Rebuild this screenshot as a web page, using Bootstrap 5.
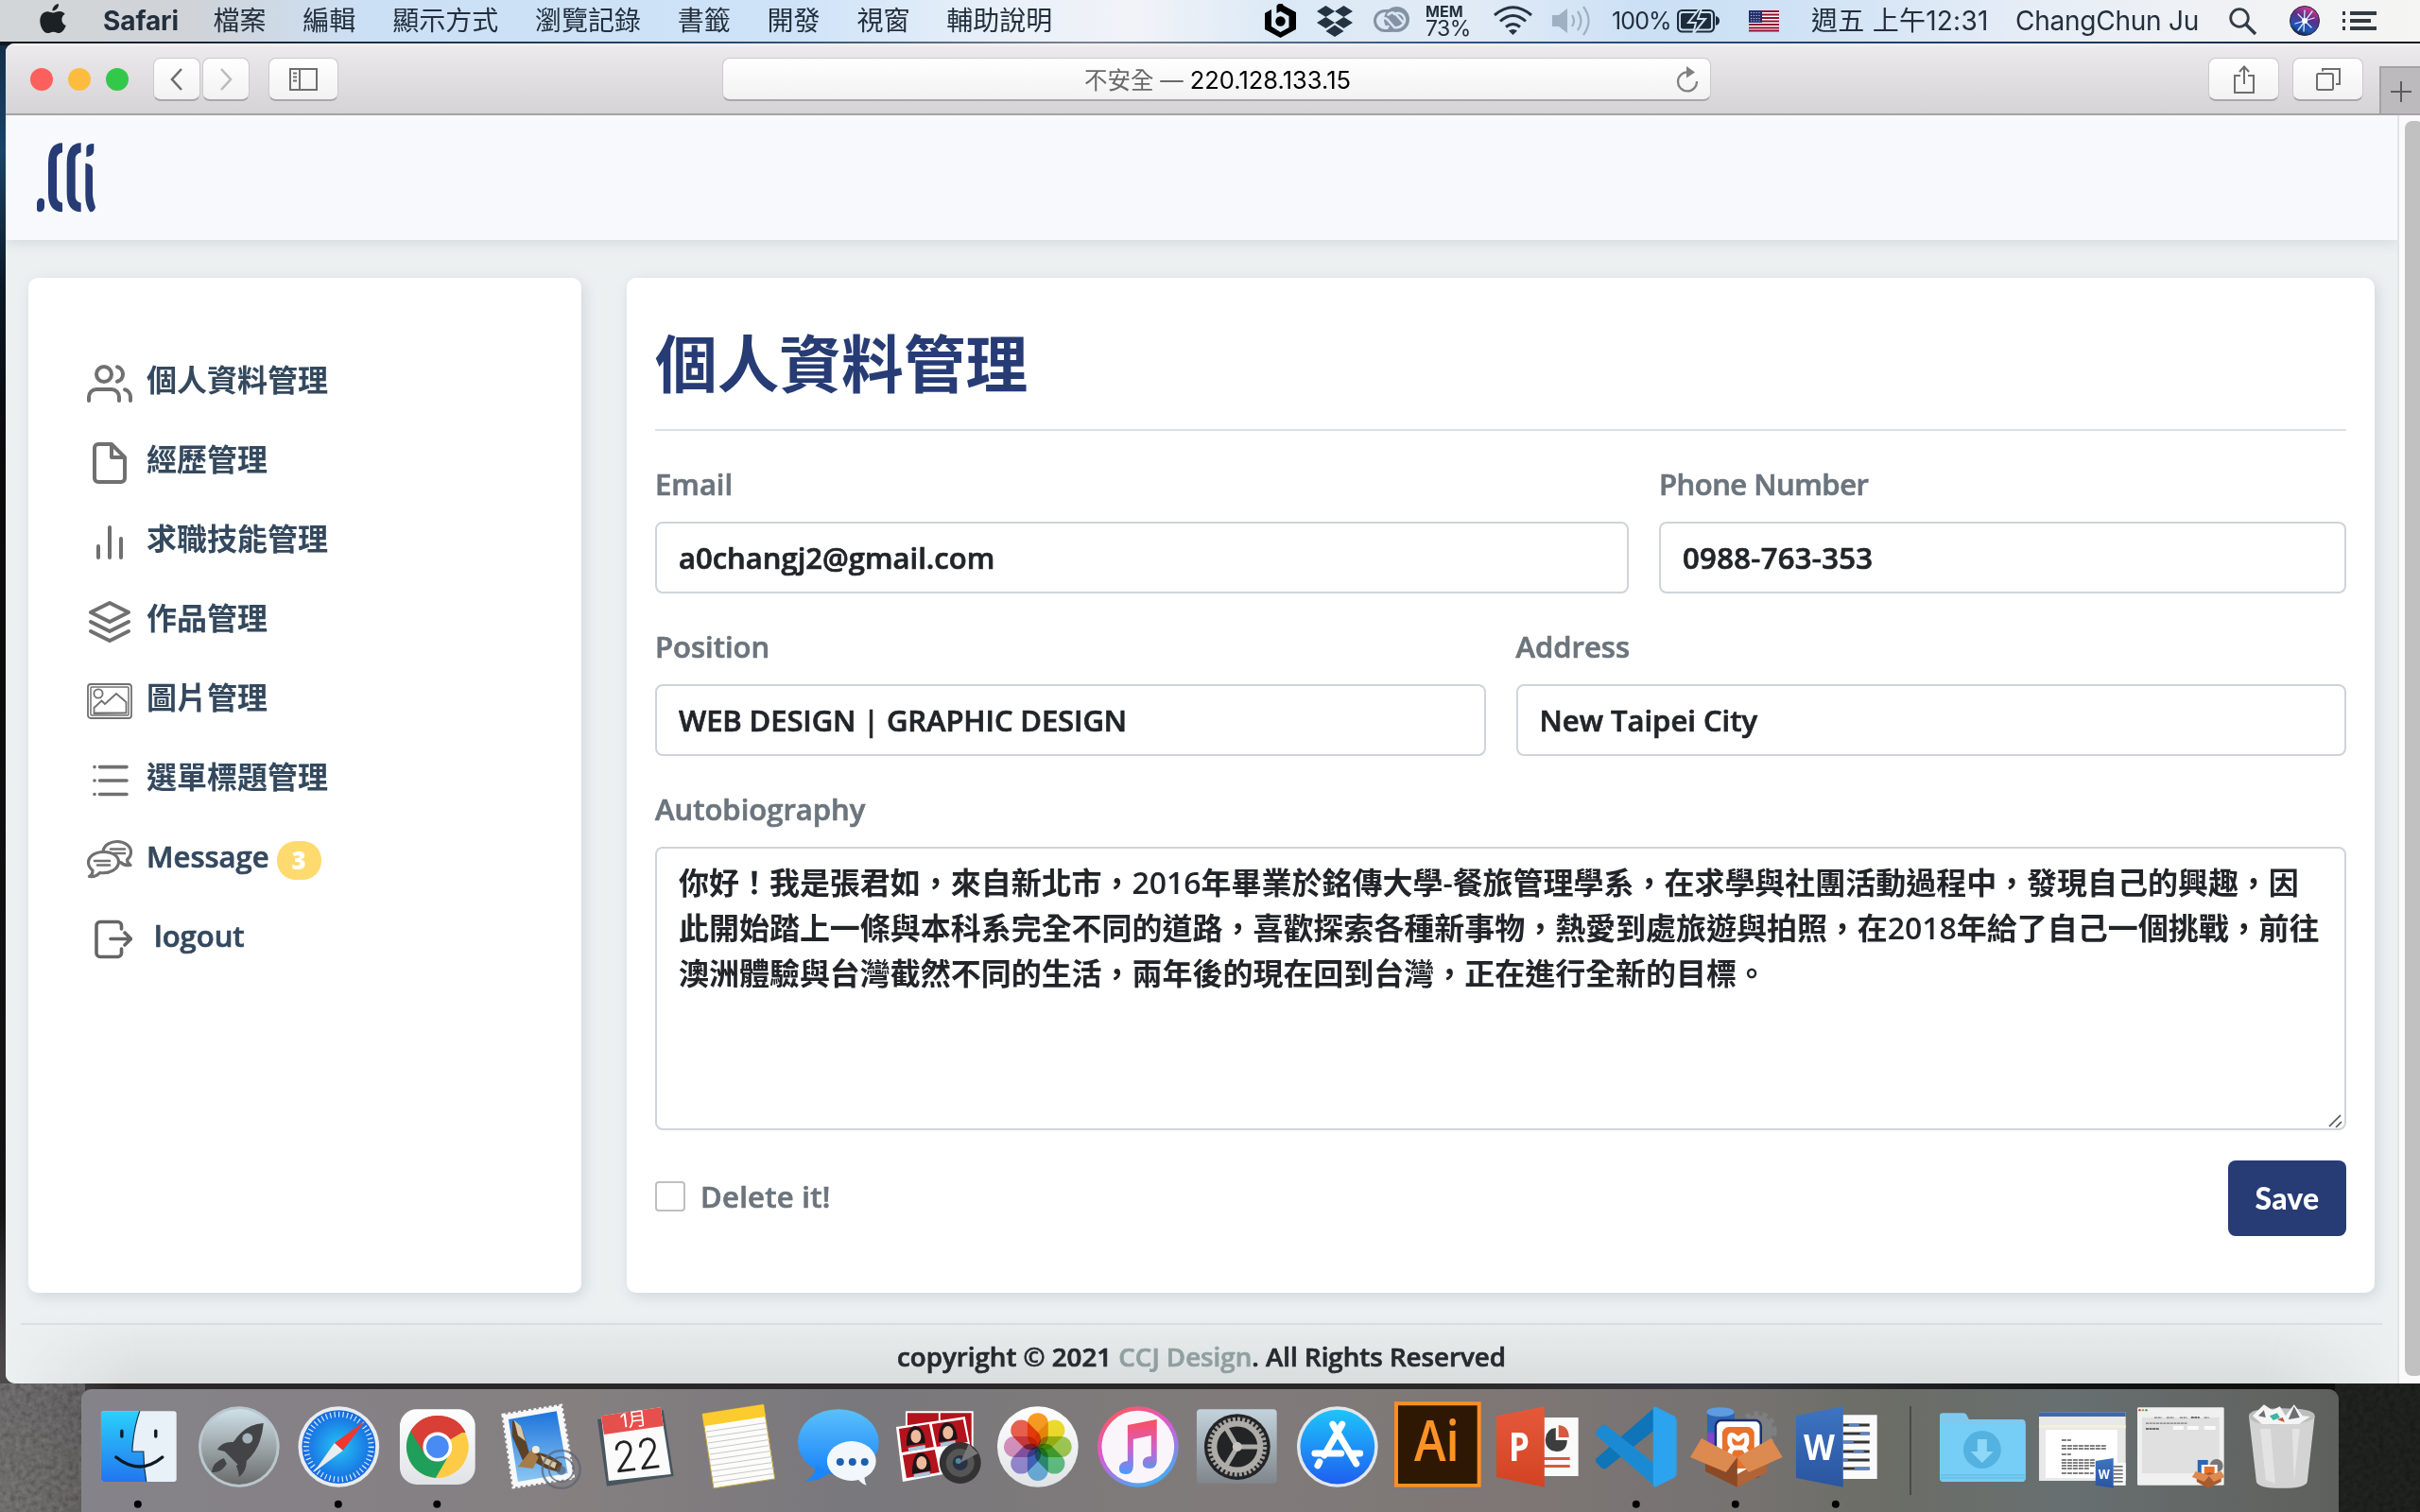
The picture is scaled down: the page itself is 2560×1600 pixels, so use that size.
<!DOCTYPE html>
<html lang="zh-Hant">
<head>
<meta charset="utf-8">
<title>個人資料管理</title>
<link href="https://cdn.jsdelivr.net/npm/bootstrap@5.3.0/dist/css/bootstrap.min.css" rel="stylesheet">
<style>
:root{--navy:#273c75;--slate:#34495e;--page:#ecf0f1}
html,body{width:2560px;height:1600px;overflow:hidden}
body{font-family:"Open Sans","Noto Sans CJK TC",sans-serif;background:#0c0e12;color:#212529}
svg{display:block;flex:none}
.desktop{width:2560px;height:1600px;isolation:isolate}
.wall{inset:0;z-index:-1}
/* menu bar */
.menubar{height:44px;font:400 28px/44px Inter,"Noto Sans CJK TC",sans-serif;color:#232f3d;
 background:linear-gradient(90deg,#d3d6d8 0,#cfd3d8 8%,#cce0f5 15%,#cfe3f8 33%,#eaf1f9 42%,#f1f3f8 47%,#dbe9f6 53%,#e1ebf6 61%,#cbe0f5 68%,#cfe2f5 74%,#e6edf6 84%,#eef1f5 90%,#f5f5f3 100%);white-space:nowrap}
.menubar .apple{margin-left:42px;width:67px}
.menubar .app-name{width:116.5px;font-weight:700;letter-spacing:-.1px}
.menu-items{gap:38.8px}
.tray{display:grid;grid-template-columns:55px 60px 55px 72px 62px 63px 69px 76px 66px 216px 226px 64px 56px 82px;align-items:center}
.mem{font-size:23px;line-height:20px;letter-spacing:-.6px}
.mem b{display:block;font-size:16px;line-height:16px;letter-spacing:.1px}
.pct{font-size:25px;letter-spacing:-.9px}
.clock{letter-spacing:.25px}
.user{letter-spacing:-.25px}
/* browser window */
.browser{width:2554px;height:1418px;margin:2px 0 0 6px;border-radius:9px 0 0 10px;overflow:hidden;background:var(--page)}
.toolbar{height:76px;padding:2px 0 0 26px;border-bottom:2px solid #a5a2a6;background:linear-gradient(#f5f4f5 0,#ebe9eb 6%,#d5d3d6 100%)}
.light{width:24px;height:24px;border-radius:50%;margin-right:16px;flex:none}
.light-red{background:#fc605c}.light-amber{background:#fdbc40}.light-green{background:#34c84a;margin-right:26px}
.tbtn{height:46px;flex:none;border-radius:8px;background:linear-gradient(#fff,#f2f2f2);border:1px solid #cbc9cb;border-bottom:2px solid #a9a7a9;display:flex;align-items:center;justify-content:center}
.nav-btn{width:50px;margin-right:2px}
.tool-btn{width:75px}
.side-btn{width:74px;margin-left:18px}
.tabs-btn{margin-left:14px}
.addr{width:1046px;margin-left:406px;margin-right:526px;padding:2px 0 0 2px;font:25.500px/44px Inter,"Noto Sans CJK TC",sans-serif;position:relative;color:#000}
.addr .secure{color:#6a6a6a;white-space:pre;font-size:24.500px}
.addr .reload{position:absolute;right:12px;top:6px}
.newtab{width:43px;height:50px;margin-left:17px;flex:none;background:#bcbabd;border:solid #a5a2a6;border-width:2px 0 0 2px}
/* page */
.site{width:2532px;flex:none;border-right:2px solid #e2e4e4;background:var(--page);height:1342px}
.site-head{height:132px;background:#f8f9fc;box-shadow:0 2px 14px rgba(60,80,90,.16);padding:8px 14px;position:relative;clip-path:inset(0 0 -30px 0)}
.scroller{width:22px;padding:6px 0 8px 6px;background:#fafafa}
.thumb{width:20px;height:100%;background:#c1c1c1;border-radius:8px}
.panels{margin:40px 24px 0;gap:48px;height:1074px}
.panel{background:#fff;border-radius:10px;box-shadow:3px 4px 14px rgba(110,125,145,.22)}
.side{width:585px;flex:none;padding:67px 0 0 62px}
.main{width:1849px;flex:none;padding:50px 30px 0}
.side li{height:84px;font-size:32px;font-weight:600;color:var(--slate);gap:15px;line-height:84px}
.side li>span:not(.count){position:relative;top:-1px}
.side svg{position:relative;top:3px}
.side .latin{font-size:31px}
.side .latin,.form-label,input.form-control,.check-label,.foot p{-webkit-text-stroke:.7px currentColor}
.count{width:47px;height:41px;border-radius:20px;background:#ffda6f;font-size:26px;line-height:41px;color:#fff;font-weight:800;padding:0;margin:7px 0 0 -7px}
h1{font-size:65.700px;line-height:80px;font-weight:700;color:var(--navy);margin:1px 0 29px}
.rule{height:2px;background:#dbdfe6}
.fields{margin-top:32px;display:flex;gap:32px}
.col-email{width:1030px}.col-phone{width:727px}
.form-label{display:block;font-size:31px;line-height:48px;font-weight:600;color:#6c757d;margin:0 0 16px}
.col-phone .form-label{letter-spacing:-.5px}
.form-control{font-size:31px;line-height:48px;font-weight:600;color:#212529;padding:12px 23px;border:2px solid #ced4da;border-radius:8px;height:76px}
.col-phone .form-control{letter-spacing:.35px}
.caps{letter-spacing:-.12px}
textarea.form-control{height:300px;font-size:32px;letter-spacing:-.03px;padding:12px 20px 0 23px;white-space:pre;overflow:hidden;resize:none}
.grip{position:absolute;right:3px;bottom:2px}
.actions{margin-top:32px}
.check-row{height:76px}
.check-label{font-size:31px;line-height:48px;font-weight:600;color:#6c757d;letter-spacing:.3px}
.form-check-input{width:32px;height:32px;border:2px solid #bfbfbf;border-radius:8px;margin:0 16px 0 0}
.btn-save{width:125px;height:80px;border-radius:8px;background:var(--navy);color:#fff;font:900 32px/80px Lato,sans-serif;letter-spacing:.2px;padding:0;border:0}
.foot{padding:32px 16px 0;height:96px;font-size:27.700px;font-weight:600}
.foot p{margin:12px 0 0;line-height:42px;text-align:center}
.foot span{color:#95a5a6}
.footshade{left:6px;top:1390px;width:2530px;height:74px;background:linear-gradient(rgba(100,105,105,0),rgba(100,105,105,.14));border-radius:0 0 0 10px;-webkit-mask:linear-gradient(90deg,transparent 0,#000 140px,#000 2390px,transparent 2530px);mask:linear-gradient(90deg,transparent 0,#000 140px,#000 2390px,transparent 2530px)}
/* dock */
.dock{width:2388px;height:130px;margin:6px 0 0 86px;padding-left:8.200px;border-radius:11px 11px 0 0;background:linear-gradient(90deg,#85838a 0,#857f80 22%,#79787c 34%,#807b7a 50%,#7d7675 64%,#757270 74%,#6b6d66 80%,#686f70 88%,#5e605c 100%);overflow:hidden}
.dock>svg{width:105.650px;height:130px}
.dock>.sep{width:48.700px}
.petals rect{mix-blend-mode:multiply}
</style>
<script src="https://cdn.jsdelivr.net/npm/bootstrap@5.3.0/dist/js/bootstrap.bundle.min.js"></script>
</head>
<body>
<div class="desktop d-flex flex-column position-relative">
<svg class="wall position-absolute" width="2560" height="1600" viewBox="0 0 2560 1600">
 <defs>
  <linearGradient id="wl" x1="0" y1="0" x2="0" y2="1"><stop offset="0" stop-color="#10253d"/><stop offset=".1" stop-color="#1a4468"/><stop offset=".19" stop-color="#0a1826"/><stop offset=".3" stop-color="#0a0a0b"/><stop offset=".8" stop-color="#151415"/><stop offset=".9" stop-color="#4b484a"/><stop offset="1" stop-color="#55534f"/></linearGradient>
  <linearGradient id="wb" x1="0" x2="1"><stop offset="0" stop-color="#4a4646" stop-opacity="0"/><stop offset=".05" stop-color="#2a2627"/><stop offset=".6" stop-color="#2b2727"/><stop offset=".7" stop-color="#33333d"/><stop offset=".85" stop-color="#101412"/><stop offset="1" stop-color="#0b0e0a"/></linearGradient>
  <linearGradient id="wt" x1="0" x2="1"><stop offset="0" stop-color="#10171f"/><stop offset=".3" stop-color="#274a70"/><stop offset=".45" stop-color="#7d8490"/><stop offset=".6" stop-color="#2d5484"/><stop offset=".9" stop-color="#16355c"/><stop offset="1" stop-color="#15181c"/></linearGradient>
  <filter id="grain" x="0" y="0" width="1" height="1"><feTurbulence type="fractalNoise" baseFrequency=".18" numOctaves="3" seed="4"/><feColorMatrix values=".6 0 0 0 .05  .6 0 0 0 .05  .6 0 0 0 .05  0 0 0 0 .35"/></filter>
 </defs>
 <rect width="2560" height="1600" fill="url(#wl)"/><rect y="1460" width="2560" height="140" fill="url(#wb)"/><rect y="40" width="2560" height="8" fill="url(#wt)"/>
 <rect y="1464" width="90" height="136" filter="url(#grain)"/><rect x="2470" y="1464" width="90" height="136" filter="url(#grain)" opacity=".35"/>
</svg>

<header class="menubar d-flex">
 <svg class="apple" viewBox="0 0 67 44"><path fill="#1c2126" d="M20 4c.4 3.600-2.600 7.600-6.500 7.400C13.200 8 16.500 4.300 20 4zM14 13.500c2.200 0 3.600-1.600 7-1.600 2.500 0 4.400 1.100 5.800 2.800-5.200 3.200-4.200 10.400 1 12.400-1.600 4.200-4.300 8-7.300 8-2.200 0-3.200-1.400-6-1.400s-3.900 1.400-6 1.400C4 35.100.3 27.800.3 21.900c0-6 3.800-9.700 7.800-9.700 2.600 0 4.500 1.300 5.900 1.300z"/></svg>
 <span class="app-name">Safari</span>
 <nav class="menu-items d-flex"><span>檔案</span><span>編輯</span><span>顯示方式</span><span>瀏覽記錄</span><span>書籤</span><span>開發</span><span>視窗</span><span>輔助說明</span></nav>
 <div class="tray ms-auto">
  <svg width="33" height="44" viewBox="0 0 33 44"><path fill-rule="evenodd" d="M0 14l7-4v18l9.500 6 9-5V17l-9-5-4 2V6l2-2h4l1.500 2L33 13v18L16.500 40 0 31z"/><circle cx="16.500" cy="22.500" r="5.200"/></svg>
  <svg width="38" height="44" viewBox="0 0 38 44" fill="#243342"><path d="M9.500 6L19 12l-9.500 6L0 12zM28.500 6L38 12l-9.500 6L19 12zM9.500 18L19 24l-9.500 6L0 24zM28.500 18L38 24l-9.500 6L19 24zM19 26.500L28.500 33 19 39 9.500 33z"/></svg>
  <svg width="38" height="44" viewBox="0 0 38 44" fill="none" stroke="#8493a3"><rect x="1.500" y="11.500" width="27" height="21" rx="10.500" stroke-width="3"/><circle cx="24.500" cy="20.500" r="13.500" fill="#8493a3" stroke="none"/><path stroke="#d9e6f4" stroke-width="2.600" stroke-linecap="round" d="M22 29L14.500 20.500q-3.500-3-6.500.5-2 4 1 7 3 2 6.500 0M15.500 15.500q4-4 8-.5l8.500 9.500M22 15q5-3 9 1 4 5 0 10-4 4-9 3"/></svg>
  <span class="mem"><b>MEM</b>73%</span>
  <svg width="41" height="44" viewBox="0 0 41 44" fill="none" stroke="#243342" stroke-width="3"><path d="M1 16Q20.500-.5 40 16M7 22.500Q20.500 10.500 34 22.500M13 28.500q7.500-6 15 0"/><path fill="#243342" stroke="none" d="M16 32.500q4.500-3 9 0L20.500 37z"/></svg>
  <svg width="41" height="44" viewBox="0 0 41 44" fill="none" stroke="#9fb0c2" stroke-width="2.200"><path fill="#9fb0c2" stroke="none" d="M0 16h7l9-7v26l-9-7H0z"/><path d="M21 16q4 6 0 12M27 12q7 10 0 20M33 7q11 15 0 30"/></svg>
  <span class="pct">100%</span>
  <svg width="45" height="44" viewBox="0 0 45 44"><rect x="1" y="11" width="38" height="22.500" rx="4.500" fill="none" stroke="#1d2b3a" stroke-width="2.200"/><rect x="4" y="14" width="32" height="16.500" rx="2" fill="#1d2b3a"/><path d="M24 9L12 24h8l-3 12 13-16h-8l4-11z" fill="#1d2b3a" stroke="#cfe2f5" stroke-width="2"/><path fill="#1d2b3a" d="M41 17q4 1 4 5t-4 5z"/></svg>
  <svg width="32" height="44" viewBox="0 0 32 44"><path fill="#fff" d="M0 11h32v22H0z"/><path stroke="#8e1230" stroke-width="2" d="M0 12h32M0 15.500h32M0 19h32M0 22.500h32M0 26h32M0 29.500h32M0 32.500h32"/><path fill="#20306b" d="M0 11h14v13H0z"/><path stroke="#c5cce4" stroke-dasharray="1.200 1.600" d="M2 13.500h11M2 16.500h11M2 19.500h11M2 22h11"/></svg>
  <span class="clock">週五 上午12:31</span>
  <span class="user">ChangChun Ju</span>
  <svg width="30" height="44" viewBox="0 0 30 44" fill="none" stroke="#333c46" stroke-width="2.800"><circle cx="11" cy="19" r="9.300"/><path stroke-width="3.400" d="M18 26l10 10"/></svg>
  <svg width="32" height="44" viewBox="0 0 32 44"><defs><linearGradient id="siri" x1=".7" y1="0" x2=".3" y2="1"><stop offset="0" stop-color="#e03a92"/><stop offset=".4" stop-color="#5a2f8a"/><stop offset=".75" stop-color="#1d57b8"/><stop offset="1" stop-color="#171a36"/></linearGradient></defs><circle cx="16" cy="22" r="15.500" fill="url(#siri)" stroke="#262b33"/><path fill="none" stroke="#cfeeff" stroke-width="1.300" stroke-linecap="round" d="M16 11l-1 22M6 25l20-6M9 15l14 14M24 12L9 32"/><circle cx="16" cy="22" r="3" fill="#f4fdff"/></svg>
  <svg width="36" height="44" viewBox="0 0 36 44" stroke="#333a42" stroke-width="4"><path d="M0 14h3M8 14h28M0 22h3M8 22h22M0 30h3M8 30h28"/></svg>
 </div>
</header>

<div class="browser flex-shrink-0">
 <div class="toolbar d-flex align-items-center">
  <i class="light light-red"></i><i class="light light-amber"></i><i class="light light-green"></i>
  <div class="tbtn nav-btn"><svg width="16" height="26" viewBox="0 0 16 26" fill="none" stroke="#6e6e6e" stroke-width="2.600"><path d="M13 2L3 13l10 11"/></svg></div>
  <div class="tbtn nav-btn"><svg width="16" height="26" viewBox="0 0 16 26" fill="none" stroke="#bcbcbc" stroke-width="2.600"><path d="M3 2l10 11L3 24"/></svg></div>
  <div class="tbtn side-btn"><svg width="30" height="24" viewBox="0 0 30 24" fill="none" stroke="#6e6e6e" stroke-width="2"><path d="M1 1h28v22H1zM11 1v22M4 5.500h4M4 9.500h4M4 13.500h4"/></svg></div>
  <div class="tbtn addr"><span class="secure">不安全 — </span><span>220.128.133.15</span>
   <svg class="reload" width="24" height="32" viewBox="0 0 24 32"><path d="M13 8.500A10 10 0 1 0 22 18" fill="none" stroke="#808080" stroke-width="2.300"/><path fill="#808080" d="M11 2l9 6.500-9 6z"/></svg></div>
  <div class="tbtn tool-btn"><svg width="24" height="32" viewBox="0 0 24 32" fill="none" stroke="#6e6e6e" stroke-width="2"><path d="M8 12H2v18h20V12h-6M12 21V3M7 8l5-5.500L17 8"/></svg></div>
  <div class="tbtn tool-btn tabs-btn"><svg width="26" height="26" viewBox="0 0 26 26" fill="none" stroke="#6e6e6e" stroke-width="2"><rect x="1" y="7" width="17" height="17" rx="1.500"/><path d="M7 4.500V2h18v16h-4"/></svg></div>
  <div class="newtab align-self-end"><svg width="41" height="48" viewBox="0 0 41 48" stroke="#5c5c5e" stroke-width="2"><path d="M21 14v22M10 25h22"/></svg></div>
 </div>
 <div class="d-flex">
 <div class="site">
  <div class="site-head">
   <svg width="110" height="110" viewBox="0 0 330 330" fill="#273c75"><path d="M138 64Q93 64 93 130V222Q93 283 138 283V254Q120 252 120 232V115Q120 98 138 94zM197 64Q152 64 152 130V222Q152 283 197 283V254Q179 252 179 232V115Q179 98 197 94zM238 66Q214 66 214 80V108Q238 106 238 88zM211 128Q234 130 234 148V225Q234 240 243 268Q240 283 226 283Q211 262 211 232zM69 239Q81 240 81 250V267Q80 282 66 283Q57 283 57 274V255Q58 241 69 239z"/></svg>
  </div>
  <div class="panels d-flex">
   <aside class="panel side">
    <ul class="list-unstyled m-0">
     <li class="d-flex align-items-center"><svg width="48" height="48" viewBox="0 0 24 24" fill="none" stroke="#707070" stroke-width="2" stroke-linecap="round" stroke-linejoin="round"><path d="M17 21v-2a4 4 0 0 0-4-4H5a4 4 0 0 0-4 4v2"/><circle cx="9" cy="7" r="4"/><path d="M23 21v-2a4 4 0 0 0-3-3.870M16 3.130a4 4 0 0 1 0 7.750"/></svg><span>個人資料管理</span></li>
     <li class="d-flex align-items-center"><svg width="48" height="48" viewBox="0 0 24 24" fill="none" stroke="#707070" stroke-width="2" stroke-linecap="round" stroke-linejoin="round"><path d="M13 2H6a2 2 0 0 0-2 2v16a2 2 0 0 0 2 2h12a2 2 0 0 0 2-2V9zM13 2v7h7"/></svg><span>經歷管理</span></li>
     <li class="d-flex align-items-center"><svg width="48" height="48" viewBox="0 0 24 24" fill="none" stroke="#707070" stroke-width="2" stroke-linecap="round"><path d="M18 20V10M12 20V4M6 20v-6"/></svg><span>求職技能管理</span></li>
     <li class="d-flex align-items-center"><svg width="48" height="48" viewBox="0 0 24 24" fill="none" stroke="#707070" stroke-width="2" stroke-linecap="round" stroke-linejoin="round"><path d="M12 2L2 7l10 5 10-5zM2 17l10 5 10-5M2 12l10 5 10-5"/></svg><span>作品管理</span></li>
     <li class="d-flex align-items-center"><svg width="48" height="48" viewBox="0 0 48 48" fill="none" stroke="#707070" stroke-width="1.800"><rect x="1" y="6" width="46" height="36" rx="3"/><rect x="4" y="9" width="40" height="30" rx="1" stroke-width="1.500"/><circle cx="12" cy="16" r="4.600"/><path d="M7.500 37V31l8-7.500 3.500 3.500 12-11L41.500 25V36.500zM7.500 36.500h34"/></svg><span>圖片管理</span></li>
     <li class="d-flex align-items-center"><svg width="48" height="48" viewBox="0 0 48 48" fill="none" stroke="#707070" stroke-width="3.600" stroke-linecap="round"><path d="M8 9.600h.01M13.500 9.600H42M8 24h.01M13.500 24H42M8 38.500h.01M13.500 38.500H42"/></svg><span>選單標題管理</span></li>
     <li class="d-flex align-items-center"><svg width="48" height="48" viewBox="0 0 48 48" fill="#fff" stroke="#707070" stroke-width="3.200" stroke-linejoin="round" stroke-linecap="round"><path d="M17 15C18 7.500 26 4.500 32 4.500c8 0 14.500 5 14.500 11 0 4-2 6.500-4 8 0 3 1.500 4.500 3.500 6-4 .5-8-.5-10.500-3l-7 0z"/><path d="M17.500 15.500C8 15.500 1.500 20.500 1.500 26.500c0 4 2 6.500 4.500 8.500 0 3-1.500 5.500-3.500 6.500 4 .5 8.500-1 11-4 11 1.500 20-4 20-11.500 0-6-6.500-10.500-16-10.500z"/><path stroke-width="2.600" d="M8 25h16M11 29.500h13M25 12.500h15M29 17h11"/></svg><span class="latin">Message</span><span class="badge count">3</span></li>
     <li class="d-flex align-items-center"><svg width="48" height="48" viewBox="0 0 48 48" fill="none" stroke="#656565" stroke-width="3.600" stroke-linecap="round" stroke-linejoin="round"><path d="M36.500 13V9.500a4 4 0 0 0-4-4H14a4 4 0 0 0-4 4v29a4 4 0 0 0 4 4h18.500a4 4 0 0 0 4-4V34M25 23.500h21.500M40 17l6.500 6.500L40 30"/></svg><span class="latin ms-2">logout</span></li>
    </ul>
   </aside>
   <main class="panel main">
    <h1>個人資料管理</h1>
    <div class="rule"></div>
    <form>
     <div class="fields">
      <div class="col-email"><label class="form-label">Email</label><input class="form-control" value="a0changj2@gmail.com"></div>
      <div class="col-phone"><label class="form-label">Phone Number</label><input class="form-control" value="0988-763-353"></div>
     </div>
     <div class="fields">
      <div class="flex-fill"><label class="form-label">Position</label><input class="form-control caps" value="WEB DESIGN | GRAPHIC DESIGN"></div>
      <div class="flex-fill"><label class="form-label">Address</label><input class="form-control" value="New Taipei City"></div>
     </div>
     <div class="fields">
      <div class="flex-fill position-relative"><label class="form-label">Autobiography</label><textarea class="form-control">你好！我是張君如，來自新北市，2016年畢業於銘傳大學-餐旅管理學系，在求學與社團活動過程中，發現自己的興趣，因
此開始踏上一條與本科系完全不同的道路，喜歡探索各種新事物，熱愛到處旅遊與拍照，在2018年給了自己一個挑戰，前往
澳洲體驗與台灣截然不同的生活，兩年後的現在回到台灣，正在進行全新的目標。</textarea>
      <svg class="grip" width="16" height="16" viewBox="0 0 16 16" stroke="#555" stroke-width="1.700"><path d="M1 14L13 2M8 15l6-6"/></svg></div>
     </div>
     <div class="actions d-flex justify-content-between">
      <div class="check-row d-flex align-items-center"><input type="checkbox" class="form-check-input"><span class="check-label">Delete it!</span></div>
      <button type="button" class="btn btn-save">Save</button>
     </div>
    </form>
   </main>
  </div>
  <footer class="foot"><div class="rule"></div><p>copyright © 2021 <span>CCJ Design</span>. All Rights Reserved</p></footer>
 </div>
 <div class="scroller"><div class="thumb"></div></div>
 </div>
</div>
<div class="footshade position-absolute"></div>

<div class="dock d-flex flex-shrink-0">
<svg viewBox="0 0 106 130"><defs>
 <linearGradient id="fa" x1="0" y1="0" x2="0" y2="1"><stop offset="0" stop-color="#2bd0fd"/><stop offset="1" stop-color="#2276ee"/></linearGradient>
 <linearGradient id="sky" x1="0" y1="0" x2="0" y2="1"><stop offset="0" stop-color="#1e74dc"/><stop offset="1" stop-color="#8cc6f2"/></linearGradient>
 <linearGradient id="sil" x1="0" y1="0" x2="0" y2="1"><stop offset="0" stop-color="#cfe0e8"/><stop offset="1" stop-color="#6b6c6b"/></linearGradient>
 <linearGradient id="st" x1="0" y1="0" x2="0" y2="1"><stop offset="0" stop-color="#1ec4fb"/><stop offset="1" stop-color="#1e5ff0"/></linearGradient>
 <linearGradient id="msg" x1="0" y1="0" x2="0" y2="1"><stop offset="0" stop-color="#5ac1fb"/><stop offset="1" stop-color="#1a82fb"/></linearGradient>
 <radialGradient id="sf"><stop offset="0" stop-color="#27c3f5"/><stop offset="1" stop-color="#1667e0"/></radialGradient>
 <linearGradient id="it" x1="0" y1="0" x2="0" y2="1"><stop offset="0" stop-color="#fb4f59"/><stop offset=".5" stop-color="#d45ec4"/><stop offset="1" stop-color="#4a9bfb"/></linearGradient>
 <linearGradient id="ring" x1=".2" y1="0" x2=".7" y2="1"><stop offset="0" stop-color="#fb5a52"/><stop offset=".45" stop-color="#d95ad8"/><stop offset="1" stop-color="#37b2f8"/></linearGradient>
 <linearGradient id="wh" x1="0" y1="0" x2="0" y2="1"><stop offset="0" stop-color="#fff"/><stop offset="1" stop-color="#e0e3e6"/></linearGradient>
 <linearGradient id="pref" x1="0" y1="0" x2="0" y2="1"><stop offset="0" stop-color="#c3d3dd"/><stop offset="1" stop-color="#7f868b"/></linearGradient>
 <linearGradient id="wd" x1="0" y1="0" x2="0" y2="1"><stop offset="0" stop-color="#3d74c2"/><stop offset="1" stop-color="#2a559f"/></linearGradient>
 <linearGradient id="pp" x1="0" y1="0" x2="0" y2="1"><stop offset="0" stop-color="#e5593b"/><stop offset="1" stop-color="#d14322"/></linearGradient>
 </defs><rect x="13" y="23" width="80" height="75" rx="3" fill="#e8f0f8"/><path fill="url(#fa)" d="M16 23h38q-7 20-8 43h12q0 16 3 32H16q-3 0-3-3V26q0-3 3-3z"/><path fill="none" stroke="#14344e" stroke-width="1.200" d="M54 23q-7 20-8 43h12q0 16 3 32"/><path fill="none" stroke="#0c1a27" stroke-width="3.400" stroke-linecap="round" d="M35 44v6M71 44v6M29 72q25 20 49 0"/><circle cx="52" cy="122" r="4"/></svg>
<svg viewBox="0 0 106 130"><circle cx="53" cy="61" r="43" fill="#b9c6cd"/><circle cx="53" cy="61" r="40" fill="url(#sil)"/><path fill="#424446" d="M79 36q-20 1-32 20-12-1-17 8l8 2 14 14-2 1q3 7 3 12 8-6 8-17 16-14 18-40zM37 73q-12 4-13 15 10 1 16-9z"/><circle cx="62" cy="52" r="5.500" fill="#a6b3ba"/></svg>
<svg viewBox="0 0 106 130"><circle cx="53.500" cy="61" r="43" fill="#e9ecef"/><circle cx="53.500" cy="61" r="39" fill="url(#sf)"/><circle cx="53.500" cy="61" r="34.500" fill="none" stroke="#d9ecfb" stroke-width="6" stroke-dasharray="1.200 3.300"/><path fill="#f0362d" d="M81 34L49 57l9 8z"/><path fill="#e9edf0" d="M27 88l22-31 9 8z"/><circle cx="53" cy="122" r="4"/></svg>
<svg viewBox="0 0 106 130"><rect x="12" y="21" width="80" height="80" rx="18" fill="url(#wh)"/><circle cx="52" cy="61" r="33" fill="#fdcb45"/><path fill="#d93f35" d="M52 61L23.400 44.500A33 33 0 0 1 80.600 44.500z"/><path fill="#1f9f59" d="M52 61L23.400 44.500A33 33 0 0 0 50 94L64 70z"/><path fill="#d93f35" d="M23.400 44.500L38 68 52 46h30q-8-18-30-18-19 0-28.600 16.500z"/><circle cx="52" cy="61" r="15.500" fill="#fff"/><circle cx="52" cy="61" r="12" fill="#4a8af4"/><circle cx="51.500" cy="122" r="4"/></svg>
<svg viewBox="0 0 106 130"><path fill="#f6f8fa" stroke="#f6f8fa" stroke-width="3" stroke-dasharray="3 2.500" d="M15 27L77 17l13 77-64 10z"/><path fill="url(#sky)" d="M21 32l51-9 12 66-53 9z"/><path fill="#5c4228" d="M25 33q8 4 12 14l6 20 5-4 4 4q14 2 26 12l-3 9-14-4-11-6-12 2-6-14-7-16z"/><path fill="#d9c6a2" d="M27 33l7 6 5 16-8-6zM55 70l17 8-2 6-12-6z"/><path fill="#a67c48" d="M31 82l14-18 8 8-6 12z"/><circle cx="50" cy="64" r="4" fill="#f2ead8"/><g fill="none" stroke="#5a6476" opacity=".7"><circle cx="77" cy="85" r="20" stroke-width="2.500"/><circle cx="77" cy="85" r="13" stroke-width="2"/></g><circle cx="77" cy="86" r="5" fill="#56627a" opacity=".7"/></svg>
<svg viewBox="0 0 106 130"><path fill="#46555e" d="M10 32l70-10 11 70-71 11z"/><path fill="#fbfbfb" d="M14 28l63-9 11 71-66 7z"/><path fill="#e5504d" d="M14 28l63-9 3 20-63 9z"/><text transform="rotate(-7 48 39)" x="35" y="39" font-size="20" fill="#fff" font-family="Inter,'Noto Sans CJK TC',sans-serif">1月</text><text transform="rotate(-7 52 85)" x="28" y="86" font-size="45" fill="#222" font-weight="300" font-family="Inter,sans-serif" textLength="51" lengthAdjust="spacingAndGlyphs">22</text></svg>
<svg viewBox="0 0 106 130"><path fill="#fcfcfa" stroke="#c4a33c" d="M15 26l65-10 12 79-65 10z"/><path fill="#fccb2e" d="M15 26l65-10 2 13-65 10z"/><path stroke="#c6c8c9" stroke-width="1" d="M19 45l64-9.500M20 51l64-9.500M21 57l64-9.500M22 63l64-9.500M23 69l64-9.500M23 75l65-9.500M24 81l65-9.500M25 87l65-9.500M26 93l65-9.500M26 99l65-9.500"/></svg>
<svg viewBox="0 0 106 130"><ellipse cx="53" cy="56" rx="43" ry="35" fill="url(#msg)"/><path fill="#1a86fb" d="M30 80q-2 13-12 17 16 1 24-8z"/><ellipse cx="67" cy="76" rx="26" ry="21" fill="#f1f7fd"/><path fill="#f1f7fd" d="M73 94q4 6 10 8-3-6-2-12z"/><g fill="#1d5fae"><circle cx="55" cy="77" r="4"/><circle cx="68" cy="77" r="4"/><circle cx="81" cy="77" r="4"/></g></svg>
<svg viewBox="0 0 106 130"><path fill="#fff" d="M19 23h72v56H19z"/><path fill="#b3131c" d="M21 25h33v24H21zM56 25h33v52H56z"/><path fill="#fff" d="M9 40l73-11 10 55-76 14z"/><path fill="#b3131c" d="M12 42l32-5 5 24-34 6zM47 37l33-5 5 24-33 5zM16 70l34-6 5 24-35 6z"/><g fill="#1d1416"><path d="M20 60q0-20 9-21 10 1 11 18zM54 56q0-20 9-21 10 1 11 18zM26 90q0-22 9-23 10 1 11 19z"/></g><g fill="#eeb99c"><ellipse cx="30" cy="50" rx="5.500" ry="7"/><ellipse cx="64" cy="46" rx="5.500" ry="7"/><ellipse cx="36" cy="78" rx="5.500" ry="7"/></g><path stroke="#a9c3dc" stroke-width="4" d="M22 64l18-3M56 59l16-3M28 92l17-3"/><circle cx="77" cy="78" r="22" fill="#333"/><circle cx="77" cy="78" r="15" fill="#555"/><circle cx="77" cy="78" r="8" fill="#2a3048"/><path fill="#777" d="M77 78L86 58l10 10z"/><circle cx="75" cy="76" r="3" fill="#4b8d8d"/></svg>
<svg viewBox="0 0 106 130"><circle cx="53" cy="61" r="43" fill="url(#wh)"/><g class="petals"><rect x="42" y="25" width="22" height="36" rx="11" fill="#fb9d22"/><rect x="42" y="25" width="22" height="36" rx="11" fill="#f3df2d" transform="rotate(45 53 61)"/><rect x="42" y="25" width="22" height="36" rx="11" fill="#a4cf54" transform="rotate(90 53 61)"/><rect x="42" y="25" width="22" height="36" rx="11" fill="#67c986" transform="rotate(135 53 61)"/><rect x="42" y="25" width="22" height="36" rx="11" fill="#72b8e5" transform="rotate(180 53 61)"/><rect x="42" y="25" width="22" height="36" rx="11" fill="#9d90d8" transform="rotate(225 53 61)"/><rect x="42" y="25" width="22" height="36" rx="11" fill="#df96c4" transform="rotate(270 53 61)"/><rect x="42" y="25" width="22" height="36" rx="11" fill="#f0624f" transform="rotate(315 53 61)"/></g></svg>
<svg viewBox="0 0 106 130"><circle cx="53" cy="61" r="43" fill="url(#ring)"/><circle cx="53" cy="61" r="38.500" fill="#faf5fa"/><path fill="url(#it)" d="M42 38l31-6v44q0 8-8 8-7 0-7-6 0-7 9-7V49l-19 4v28q0 9-8 9-7 0-7-6 0-7 9-8z"/></svg>
<svg viewBox="0 0 106 130"><rect x="10" y="21" width="85" height="79" rx="4" fill="url(#pref)"/><circle cx="53" cy="61" r="35" fill="#232425"/><circle cx="53" cy="61" r="29" fill="none" stroke="#a2a19e" stroke-width="5" stroke-dasharray="3 2.060"/><circle cx="53" cy="61" r="24.500" fill="none" stroke="#aeaca8" stroke-width="6"/><path stroke="#aeaca8" stroke-width="5" d="M53 61h25M53 61L40 39M53 61L40 83"/><circle cx="53" cy="61" r="5" fill="#c5c4c0"/></svg>
<svg viewBox="0 0 106 130"><circle cx="53" cy="61" r="43" fill="#e4e6ea"/><circle cx="53" cy="61" r="39.500" fill="url(#st)"/><path fill="none" stroke="#fff" stroke-width="7" stroke-linecap="round" d="M58 37L39 70M48 37L73 79M29 68h28M69 68h8M34 77l-2 4"/></svg>
<svg viewBox="0 0 106 130"><path fill="#fc8e22" d="M7 13h92v91H7z"/><path fill="#2e1803" d="M11 17h84v83H11z"/><text x="28" y="76" font-size="59" fill="#fc9226" font-family="'Open Sans',sans-serif" font-weight="600" textLength="48" lengthAdjust="spacingAndGlyphs">Ai</text></svg>
<svg viewBox="0 0 106 130"><path fill="#fafafa" d="M50 30h47v62H50z"/><path fill="#3d3d3d" d="M73 41v13h12q0 12-11 12-12-1-12-13 1-11 11-12z"/><path fill="#d45a41" d="M76 38q11 1 11 13H76zM60 72h28v3H60zM60 80h28v3H60z"/><path fill="url(#pp)" d="M10 28l51-10v86L10 93z"/><text x="23" y="76" font-size="42" font-weight="700" fill="#fff" font-family="'Open Sans',sans-serif" textLength="22" lengthAdjust="spacingAndGlyphs">P</text></svg>
<svg viewBox="0 0 106 130"><path fill="#0f74b8" d="M73 18v24L20 84q-3 1-5-1l-5-5q-2-3 0-5z"/><path fill="#1b8ad3" d="M73 104V80L20 38q-3-1-5 1l-5 5q-2 3 0 5z"/><path fill="#2ba3ee" d="M72 18l20 10q3 2 3 5v56q0 3-3 5l-20 10q-2-1-2-3V21q0-2 2-3z"/><circle cx="52" cy="122" r="4"/></svg>
<svg viewBox="0 0 106 130"><path fill="#2d65b4" d="M22 26q14-10 29 0v60H22z"/><ellipse cx="36" cy="24" rx="14.500" ry="5" fill="#5f9be0"/><path fill="#7d48c9" d="M22 46h10v20H22z"/><circle cx="75" cy="44" r="17" fill="#7e7f80"/><circle cx="75" cy="44" r="18" fill="none" stroke="#7e7f80" stroke-width="6" stroke-dasharray="5 4"/><rect x="31" y="33" width="48" height="60" rx="6" fill="#fff" stroke="#1c2e73" stroke-width="2.500"/><rect x="38" y="40" width="34" height="44" rx="7" fill="#e9712a"/><path fill="none" stroke="#fff" stroke-width="5" stroke-linecap="round" stroke-linejoin="round" d="M50 49q-4-2-4 3v4q0 3 4 6-4 3-4 6v6M60 49q4-2 4 3v4q0 3-4 6 4 3 4 6v6M50 49l5 4 5-4M50 62h10"/><path fill="#b06437" d="M20 72l34 18 32-18v16l-32 16-34-18z"/><path fill="#dc8a4f" d="M16 52L4 72l38 16 12-16zM90 52l12 20-36 16-12-16z"/><path fill="#8b4a25" d="M54 72v32L20 87v-8l22 9z"/><circle cx="52" cy="122" r="4"/></svg>
<svg viewBox="0 0 106 130"><path fill="#fafafa" d="M50 27h46v68H50z"/><path stroke="#333" stroke-width="3" d="M60 38h28M60 47h28M60 56h28M60 66h28M60 75h28M60 84h28"/><path stroke="#5b82bd" stroke-width="3" d="M66 38h11M78 47h10M60 56h11M71 66h11M60 75h5M72 84h16"/><path fill="url(#wd)" d="M10 28l50-10v86L10 94z"/><text x="18" y="75" font-size="38" font-weight="700" fill="#fff" font-family="'Open Sans',sans-serif" textLength="33" lengthAdjust="spacingAndGlyphs">W</text><circle cx="52" cy="122" r="4"/></svg>
<svg class="sep" viewBox="0 0 48.700 130"><path d="M25 18v94" stroke="#484a47" stroke-width="2"/></svg>
<svg viewBox="0 0 106 130"><path fill="#7fc9ee" d="M8 28q0-3 3-3h22q3 0 4 3l2 4h56q4 0 4 4v58q0 4-4 4H12q-4 0-4-4z"/><path fill="#76cdf6" d="M8 37h91v57q0 4-4 4H12q-4 0-4-4z"/><circle cx="53" cy="64" r="20" fill="#53b2df"/><path fill="#8fd7f8" d="M48 53h10v13h7L53 78 41 66h7z"/><path stroke="#5fb7e0" d="M9 91h89M9 94h89"/></svg>
<svg viewBox="0 0 106 130"><path fill="#e8e8e8" d="M7 24h92v73H7z"/><path fill="#3f68a8" d="M7 24h92v5H7z"/><path fill="#f4efd8" d="M7 38h92v3H7z"/><path fill="#fff" d="M14 43h76v51H14z"/><path stroke="#555" stroke-width="1.500" stroke-dasharray="5 1" d="M31 54h10M31 60h48M31 63h48M31 69h10M31 75h36M31 78h36M31 81h36M31 84h30M31 89h34"/><path fill="#fafafa" d="M83 78h16v24H83z"/><path stroke="#444" stroke-width="1.300" d="M86 82h10M86 86h10M86 90h10M86 94h10M86 98h10"/><path fill="url(#wd)" d="M67 76l19-3v32l-19-3z"/><text x="70" y="95" font-size="14" font-weight="700" fill="#fff" font-family="'Open Sans',sans-serif" textLength="12" lengthAdjust="spacingAndGlyphs">W</text></svg>
<svg viewBox="0 0 106 130"><rect x="5" y="19" width="92" height="83" rx="1.500" fill="#f0f0f0"/><path fill="#e0e0e0" d="M10 30h82v59H10z"/><circle cx="7.500" cy="22" r="1.200" fill="#e33"/><circle cx="11" cy="22" r="1.200" fill="#b93"/><circle cx="14.500" cy="22" r="1.200" fill="#3a3"/><path stroke="#777" stroke-width="1.300" stroke-dasharray="3 .7" d="M23 30h8M36 30h8M50 30h8M76 30h5M14 36h44"/><path stroke="#444" stroke-width="1.500" stroke-dasharray="3 .6" d="M62 30h9M14 42h14"/><path stroke="#fafafa" stroke-width="4" d="M43 41h11M58 41h12M76 41h12"/><path fill="#2d65b4" d="M69 75h11v14H69z"/><circle cx="89" cy="81" r="7" fill="#777"/><path fill="#fff" d="M73 80h17v14H73z"/><path fill="#e9712a" d="M76 82h11v10H76z"/><path fill="#a85a30" d="M68 92v6l12 7 14-7v-6l-12-4z"/><path fill="#dc8a4f" d="M67 87l-4 6 13 5 5-6 5 6 12-5-4-6-13 4z"/></svg>
<svg viewBox="0 0 106 130"><path fill="#d9d9d9" fill-opacity=".95" d="M18 28L26 98q2 7 27 7t27-7l8-70z"/><path fill="#bcbdbc" d="M18 28q0-8 35-8t35 8-35 9-35-9z"/><path fill="#f5f5f5" d="M22 28l12-12 9 6 8-4 6 10 9-12 9 12 8 1-12 8H32z"/><path fill="#6b6f72" d="M28 28l8 2-2-8zM60 32l6-14 6 12z"/><path fill="#3bb6a4" d="M40 28l8-3 3 5-7 3z"/><path fill="#c8503c" d="M48 32l6-2 2 5z"/><path fill="#efefef" opacity=".6" d="M30 42l6 54 10 4-5-58zM64 42h8l-6 56z"/></svg>
</div>
</div>
</body>
</html>
